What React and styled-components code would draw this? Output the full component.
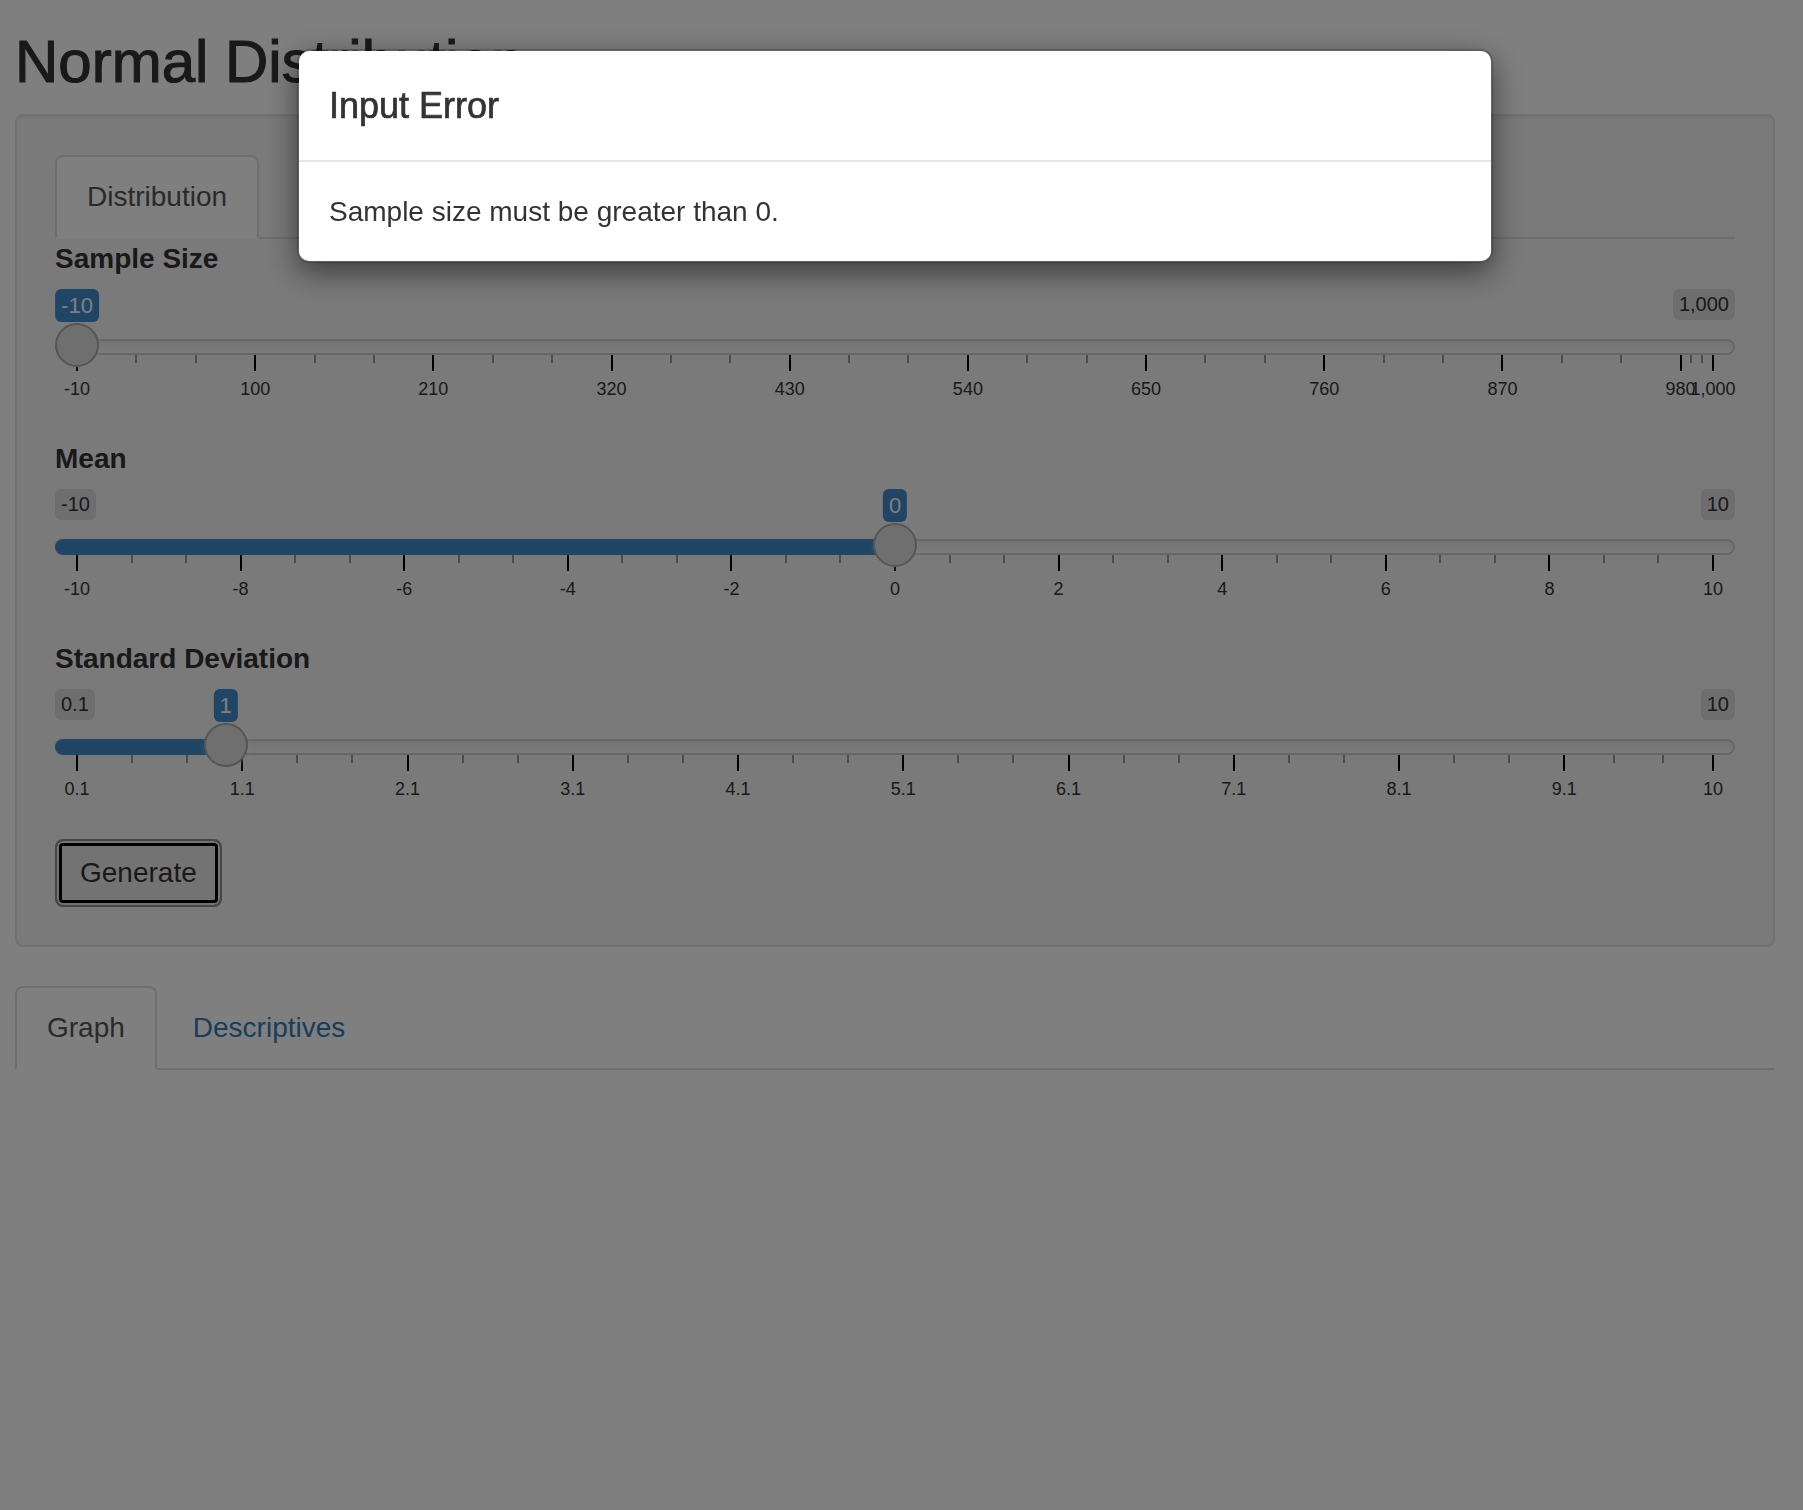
import React from "react";
import styled, { createGlobalStyle } from "styled-components";

const GlobalStyle = createGlobalStyle`
  html, body { margin: 0; padding: 0; background: #fff; }
  body {
    font-family: "Liberation Sans", Arial, Helvetica, sans-serif;
    color: #333;
    font-size: 28px;
    line-height: 40px;
  }
  * { box-sizing: border-box; }
`;

const Page = styled.div`
  width: 1790px;
  padding: 0 15px;
`;

const Title = styled.h2`
  margin: 29px 0 19px;
  font-size: 60px;
  line-height: 66px;
  font-weight: 500;
  color: #333;
  -webkit-text-stroke: 1.1px #333;
`;

const Well = styled.div`
  background: #f5f5f5;
  border: 2px solid #e3e3e3;
  border-radius: 8px;
  box-shadow: inset 0 2px 2px rgba(0, 0, 0, 0.05);
  padding: 39px 38px 38px;
  margin-bottom: 39px;
`;

const NavTabs = styled.ul`
  display: flex;
  list-style: none;
  margin: 0;
  padding: 0;
  border-bottom: 2px solid #ddd;
`;

const TabItem = styled.li`
  margin-bottom: -2px;
`;

const TabLink = styled.a`
  display: block;
  padding: 20px 30px;
  line-height: 40px;
  font-size: 28px;
  margin-right: 4px;
  border: 2px solid transparent;
  border-radius: 8px 8px 0 0;
  text-decoration: none;
  cursor: pointer;
  color: ${(p) => (p.$active ? "#555" : "#337ab7")};
  background: ${(p) => (p.$active ? "#fff" : "transparent")};
  border-color: ${(p) => (p.$active ? "#ddd #ddd transparent" : "transparent")};
`;

const FormGroup = styled.div`
  margin-bottom: 30px;
`;

const Label = styled.label`
  display: block;
  font-size: 28px;
  line-height: 40px;
  font-weight: 700;
  margin-bottom: 10px;
  color: #333;
`;

const SliderBox = styled.div`
  position: relative;
  height: 120px;
`;

const Line = styled.div`
  position: absolute;
  top: 50px;
  left: 0;
  right: 0;
  height: 16px;
  border: 2px solid #ccc;
  border-radius: 16px;
  background: linear-gradient(to bottom, #dedede -50%, #fff 150%);
`;

const Bar = styled.div`
  position: absolute;
  top: 50px;
  left: 0;
  height: 16px;
  background: #428bca;
  border-radius: 16px 0 0 16px;
`;

const Handle = styled.div`
  position: absolute;
  top: 34px;
  width: 44px;
  height: 44px;
  margin-left: -22px;
  border: 2px solid #ababab;
  background: #dedede;
  border-radius: 50%;
  box-shadow: 2px 2px 6px rgba(255, 255, 255, 0.3);
`;

const ValueBadge = styled.span`
  position: absolute;
  top: 0;
  transform: translateX(-50%);
  background: #428bca;
  color: #fff;
  font-size: 22px;
  line-height: 29px;
  padding: 2px 6px;
  border-radius: 6px;
  white-space: nowrap;
`;

const EdgeBadge = styled.span`
  position: absolute;
  top: 0;
  ${(p) => (p.$side === "right" ? "right: 0;" : "left: 0;")}
  background: rgba(0, 0, 0, 0.1);
  color: #333;
  font-size: 20px;
  line-height: 27px;
  padding: 2px 6px;
  border-radius: 6px;
  white-space: nowrap;
`;

const Tick = styled.span`
  position: absolute;
  top: 66px;
  width: 2px;
  margin-left: -1px;
  height: ${(p) => (p.$small ? "8px" : "16px")};
  background: ${(p) => (p.$small ? "#999" : "#000")};
`;

const TickLabel = styled.span`
  position: absolute;
  top: 90px;
  transform: translateX(-50%);
  font-size: 18px;
  line-height: 21px;
  color: #333;
  white-space: nowrap;
`;

const Button = styled.button`
  font-family: inherit;
  font-size: 28px;
  line-height: 40px;
  padding: 12px 23px;
  color: #333;
  background: #e6e6e6;
  border: 2px solid #8c8c8c;
  border-radius: 8px;
  box-shadow: inset 0 0 0 2px #e6e6e6, inset 0 0 0 5px #000;
  cursor: pointer;
`;

const Backdrop = styled.div`
  position: fixed;
  inset: 0;
  background: rgba(0, 0, 0, 0.5);
  z-index: 1040;
`;

const ModalLayer = styled.div`
  position: fixed;
  top: 0;
  left: 0;
  width: 1790px;
  z-index: 1050;
`;

const Dialog = styled.div`
  width: 1196px;
  margin: 49px auto 0;
  background: #fff;
  background-clip: padding-box;
  border: 2px solid rgba(0, 0, 0, 0.2);
  border-radius: 12px;
  box-shadow: 0 10px 30px rgba(0, 0, 0, 0.5);
`;

const ModalHeader = styled.div`
  padding: 29px 30px;
  border-bottom: 2px solid #e5e5e5;
`;

const ModalTitle = styled.h4`
  margin: 0;
  font-size: 36px;
  line-height: 51px;
  font-weight: 500;
  color: #333;
  -webkit-text-stroke: 0.7px #333;
`;

const ModalBody = styled.div`
  padding: 30px 30px 29px;
  font-size: 28px;
  line-height: 40px;
  color: #333;
`;

function RangeSlider({ min, max, value, labels, showMin = true, minText, maxText, valueText }) {
  const pos = (v) => (v - min) / (max - min);
  const at = (p) => `calc(22px + ${p} * (100% - 44px))`;
  const vp = pos(value);
  const smalls = [];
  for (let i = 0; i < labels.length - 1; i++) {
    const a = pos(labels[i].v);
    const b = pos(labels[i + 1].v);
    smalls.push(a + (b - a) / 3, a + (2 * (b - a)) / 3);
  }
  return (
    <SliderBox>
      {showMin && <EdgeBadge>{minText}</EdgeBadge>}
      <EdgeBadge $side="right">{maxText}</EdgeBadge>
      <Line />
      {vp > 0 && <Bar style={{ width: at(vp) }} />}
      {smalls.map((p, i) => (
        <Tick key={"s" + i} $small style={{ left: at(p) }} />
      ))}
      {labels.map((l, i) => (
        <React.Fragment key={"l" + i}>
          <Tick style={{ left: at(pos(l.v)) }} />
          <TickLabel style={{ left: at(pos(l.v)) }}>{l.t}</TickLabel>
        </React.Fragment>
      ))}
      <Handle style={{ left: at(vp) }} />
      <ValueBadge style={{ left: at(vp) }}>{valueText}</ValueBadge>
    </SliderBox>
  );
}

const sampleLabels = [-10, 100, 210, 320, 430, 540, 650, 760, 870, 980, 1000].map((v) => ({
  v,
  t: v === 1000 ? "1,000" : String(v),
}));
const meanLabels = [-10, -8, -6, -4, -2, 0, 2, 4, 6, 8, 10].map((v) => ({ v, t: String(v) }));
const sdLabels = [0.1, 1.1, 2.1, 3.1, 4.1, 5.1, 6.1, 7.1, 8.1, 9.1, 10].map((v) => ({
  v,
  t: String(v),
}));

export default function App() {
  return (
    <>
      <GlobalStyle />
      <Page>
        <Title>Normal Distribution</Title>
        <Well>
          <NavTabs>
            <TabItem>
              <TabLink $active>Distribution</TabLink>
            </TabItem>
          </NavTabs>
          <div>
            <FormGroup>
              <Label>Sample Size</Label>
              <RangeSlider
                min={-10}
                max={1000}
                value={-10}
                labels={sampleLabels}
                showMin={false}
                minText="-10"
                maxText="1,000"
                valueText="-10"
              />
            </FormGroup>
            <FormGroup>
              <Label>Mean</Label>
              <RangeSlider
                min={-10}
                max={10}
                value={0}
                labels={meanLabels}
                minText="-10"
                maxText="10"
                valueText="0"
              />
            </FormGroup>
            <FormGroup>
              <Label>Standard Deviation</Label>
              <RangeSlider
                min={0.1}
                max={10}
                value={1}
                labels={sdLabels}
                minText="0.1"
                maxText="10"
                valueText="1"
              />
            </FormGroup>
            <Button>Generate</Button>
          </div>
        </Well>
        <NavTabs>
          <TabItem>
            <TabLink $active>Graph</TabLink>
          </TabItem>
          <TabItem>
            <TabLink>Descriptives</TabLink>
          </TabItem>
        </NavTabs>
      </Page>
      <Backdrop />
      <ModalLayer>
        <Dialog>
          <ModalHeader>
            <ModalTitle>Input Error</ModalTitle>
          </ModalHeader>
          <ModalBody>Sample size must be greater than 0.</ModalBody>
        </Dialog>
      </ModalLayer>
    </>
  );
}
